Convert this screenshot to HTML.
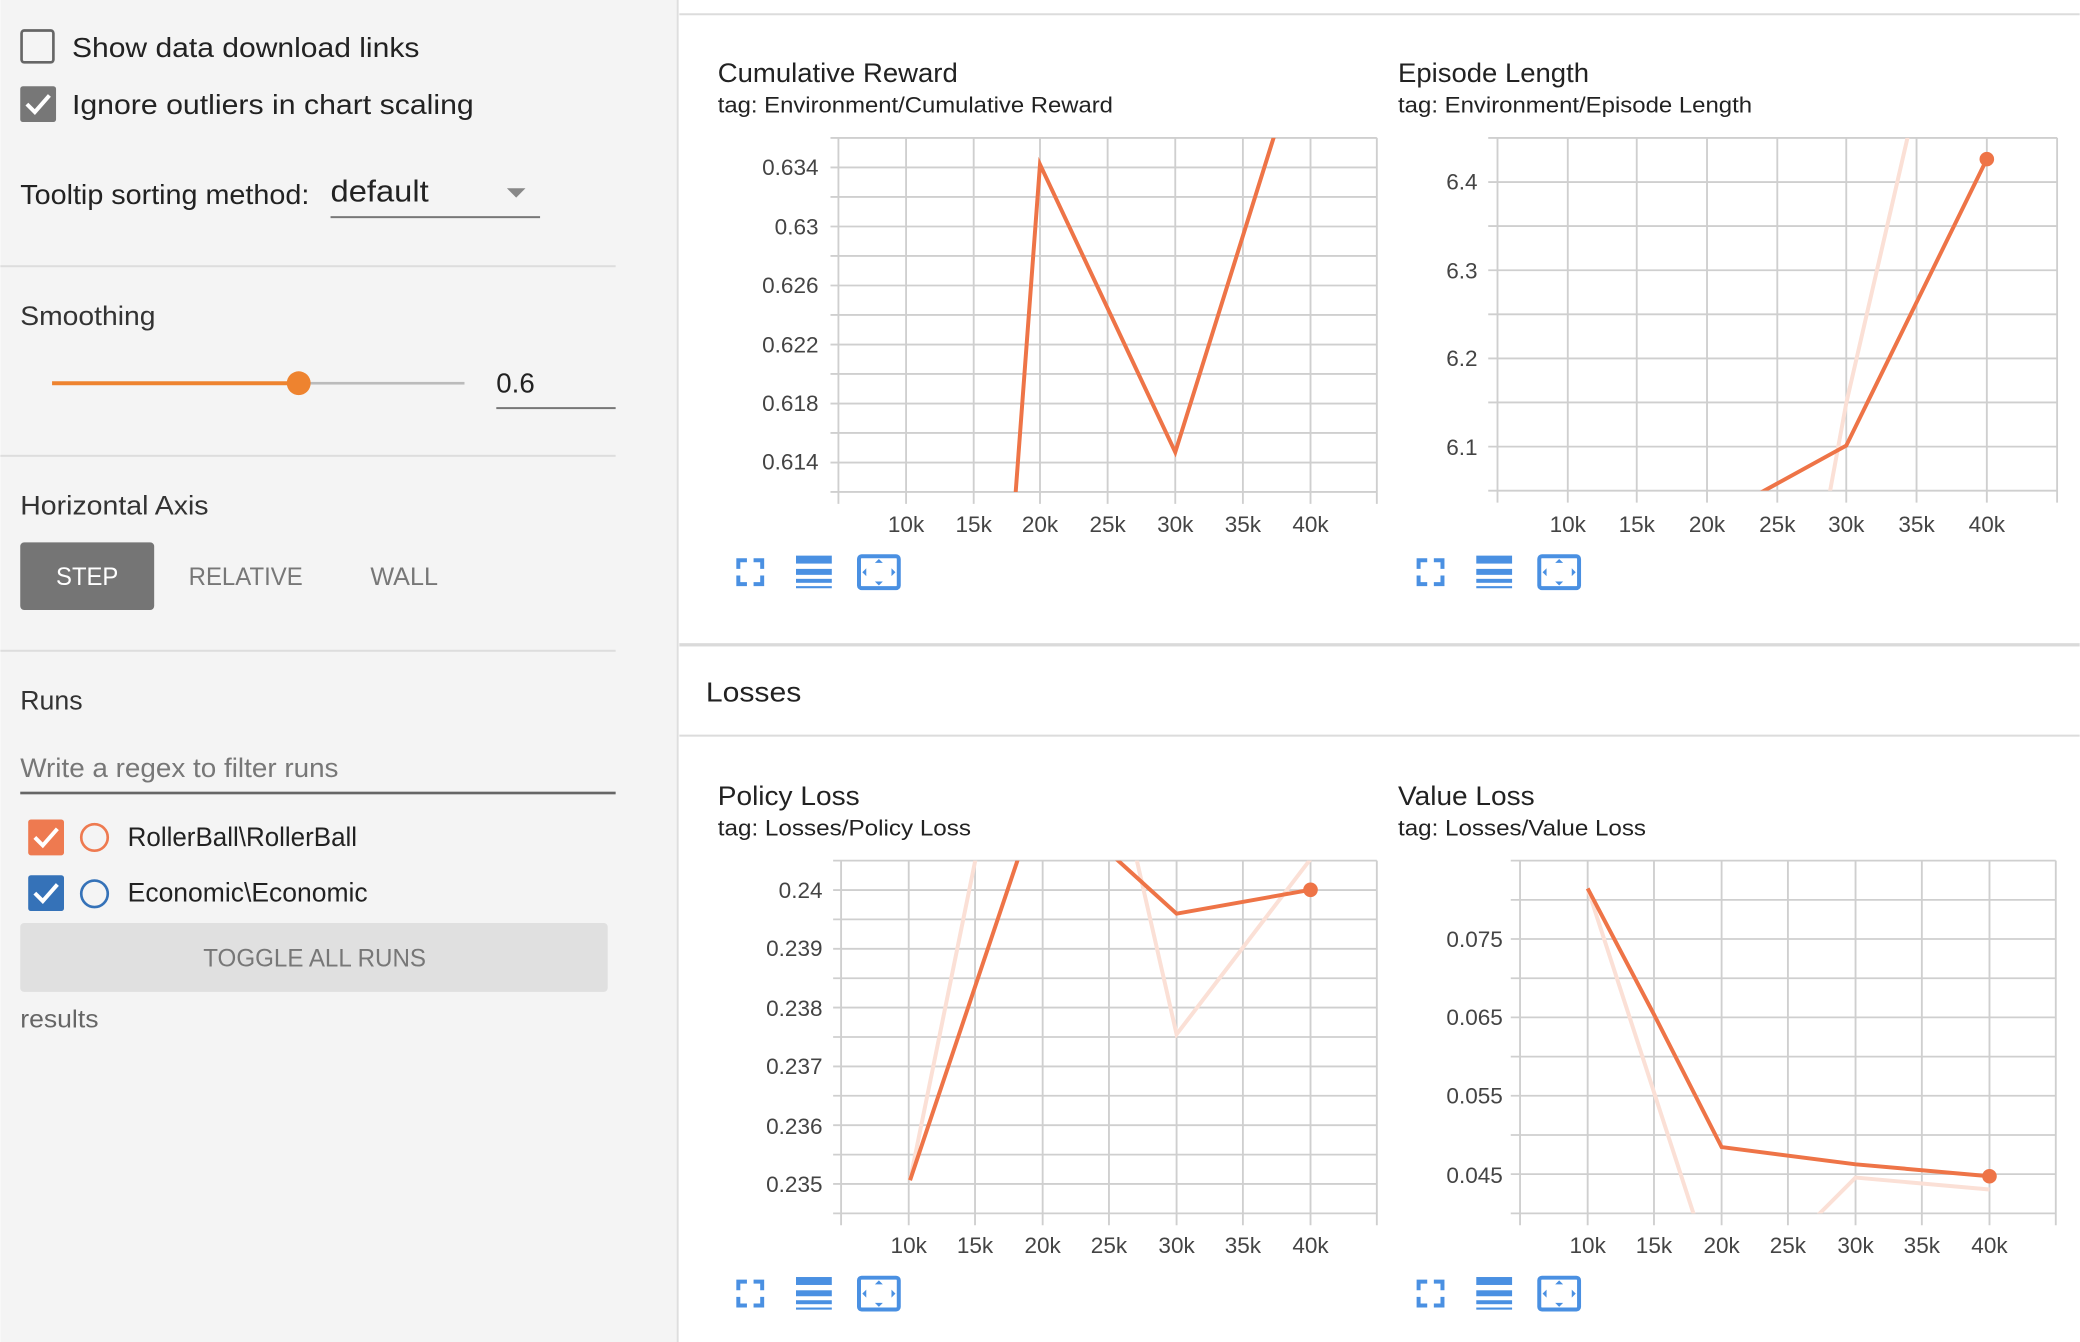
<!DOCTYPE html>
<html><head><meta charset="utf-8"><style>
html,body{margin:0;padding:0;width:2080px;height:1342px;overflow:hidden;background:#fff}
svg{display:block}
text{font-family:"Liberation Sans",sans-serif}
</style></head><body>
<svg width="2080" height="1342" viewBox="0 0 1568 1012" xmlns="http://www.w3.org/2000/svg">
<defs>
<g id="icons">
 <path d="M1.5,8V1.5H8 M13,1.5H19.5V8 M19.5,13V19.5H13 M8,19.5H1.5V13" fill="none" stroke="#4a90e2" stroke-width="3"/>
 <rect x="45" y="-2" width="27" height="6" fill="#4a90e2"/>
 <rect x="45" y="8" width="27" height="4.5" fill="#4a90e2"/>
 <rect x="45" y="15.5" width="27" height="3" fill="#4a90e2"/>
 <rect x="45" y="21" width="27" height="1.6" fill="#4a90e2"/>
 <rect x="92.5" y="-1.5" width="30" height="24" rx="2" fill="none" stroke="#4a90e2" stroke-width="3"/>
 <path d="M104.5,3.5L107.5,0.5L110.5,3.5Z M104.5,17.5L107.5,20.5L110.5,17.5Z M98,7.5L95,10.5L98,13.5Z M117,7.5L120,10.5L117,13.5Z" fill="#4a90e2"/>
</g>
<clipPath id="c1"><rect x="632" y="104" width="406" height="267"/></clipPath>
<clipPath id="c2"><rect x="1129" y="104" width="422" height="266"/></clipPath>
<clipPath id="c3"><rect x="634" y="649" width="404" height="266"/></clipPath>
<clipPath id="c4"><rect x="1146" y="649" width="404" height="266"/></clipPath>
</defs>

<!-- sidebar -->
<rect x="0" y="0" width="510" height="1012" fill="#f4f4f4"/>
<rect x="510" y="0" width="1.5" height="1012" fill="#dedede"/>
<rect x="16" y="23" width="24" height="24" rx="2" fill="none" stroke="#666" stroke-width="2"/>
<text x="54" y="43" font-size="21" fill="#222" textLength="262" lengthAdjust="spacingAndGlyphs">Show data download links</text>
<rect x="15" y="65" width="27" height="27" rx="2" fill="#777"/>
<path d="M20,78.5L26,84.5L37,72" fill="none" stroke="#fff" stroke-width="3"/>
<text x="54" y="86" font-size="21" fill="#222" textLength="303" lengthAdjust="spacingAndGlyphs">Ignore outliers in chart scaling</text>
<text x="15" y="154" font-size="21" fill="#222" textLength="218" lengthAdjust="spacingAndGlyphs">Tooltip sorting method:</text>
<text x="249" y="152" font-size="23" fill="#222" textLength="74" lengthAdjust="spacingAndGlyphs">default</text>
<path d="M382,142L396,142L389,149Z" fill="#888"/>
<rect x="249" y="163" width="158" height="1.5" fill="#777"/>
<rect x="0" y="200" width="464" height="1.5" fill="#ddd"/>
<text x="15" y="245" font-size="20" fill="#333" textLength="102" lengthAdjust="spacingAndGlyphs">Smoothing</text>
<rect x="39" y="287.5" width="186" height="3" fill="#ee832f"/>
<rect x="225" y="288" width="125" height="2" fill="#bbb"/>
<circle cx="225" cy="289" r="9" fill="#ee832f"/>
<text x="374" y="296" font-size="21" fill="#222" textLength="29" lengthAdjust="spacingAndGlyphs">0.6</text>
<rect x="374" y="307" width="90" height="1.5" fill="#777"/>
<rect x="0" y="343" width="464" height="1.5" fill="#ddd"/>
<text x="15" y="388" font-size="20" fill="#333" textLength="142" lengthAdjust="spacingAndGlyphs">Horizontal Axis</text>
<rect x="15" y="409" width="101" height="51" rx="3" fill="#757575"/>
<text x="42" y="441" font-size="19" fill="#fff" textLength="47" lengthAdjust="spacingAndGlyphs">STEP</text>
<text x="142" y="441" font-size="19" fill="#777" textLength="86" lengthAdjust="spacingAndGlyphs">RELATIVE</text>
<text x="279" y="441" font-size="19" fill="#777" textLength="51" lengthAdjust="spacingAndGlyphs">WALL</text>
<rect x="0" y="490" width="464" height="1.5" fill="#ddd"/>
<text x="15" y="535" font-size="20" fill="#333" textLength="47" lengthAdjust="spacingAndGlyphs">Runs</text>
<text x="15" y="586" font-size="20" fill="#777" textLength="240" lengthAdjust="spacingAndGlyphs">Write a regex to filter runs</text>
<rect x="15" y="597" width="449" height="2" fill="#666"/>
<rect x="21" y="618" width="27" height="27" rx="2" fill="#ee7a50"/>
<path d="M26,631.5L32,637.5L43,625" fill="none" stroke="#fff" stroke-width="3"/>
<circle cx="71" cy="631.5" r="10" fill="none" stroke="#ee7a50" stroke-width="2"/>
<text x="96" y="638" font-size="20" fill="#222" textLength="173" lengthAdjust="spacingAndGlyphs">RollerBall\RollerBall</text>
<rect x="21" y="660" width="27" height="27" rx="2" fill="#3572b8"/>
<path d="M26,673.5L32,679.5L43,667" fill="none" stroke="#fff" stroke-width="3"/>
<circle cx="71" cy="674" r="10" fill="none" stroke="#3572b8" stroke-width="2"/>
<text x="96" y="680" font-size="20" fill="#222" textLength="181" lengthAdjust="spacingAndGlyphs">Economic\Economic</text>
<rect x="15" y="696" width="443" height="52" rx="3" fill="#e0e0e0"/>
<text x="153" y="729" font-size="19" fill="#777" textLength="168" lengthAdjust="spacingAndGlyphs">TOGGLE ALL RUNS</text>
<text x="15" y="775" font-size="19" fill="#666" textLength="59" lengthAdjust="spacingAndGlyphs">results</text>

<!-- main separators -->
<rect x="512" y="10" width="1056" height="1.5" fill="#dcdcdc"/>
<rect x="512" y="485" width="1056" height="2.5" fill="#dadada"/>
<rect x="512" y="554" width="1056" height="1.5" fill="#dcdcdc"/>
<text x="532" y="529" font-size="21" fill="#222" textLength="72" lengthAdjust="spacingAndGlyphs">Losses</text>

<!-- chart 1 -->
<text x="541" y="62" font-size="20" fill="#222" textLength="181" lengthAdjust="spacingAndGlyphs">Cumulative Reward</text>
<text x="541" y="85" font-size="17" fill="#222" textLength="298" lengthAdjust="spacingAndGlyphs">tag: Environment/Cumulative Reward</text>
<path fill="none" stroke="#cfcfcf" stroke-width="1.4" d="M632,104V380M683,104V380M734,104V380M784,104V380M835,104V380M886,104V380M937,104V380M988,104V380M1038,104V380
M626,104H1038M626,126.3H1038M626,148.5H1038M626,170.8H1038M626,193H1038M626,215.3H1038M626,237.5H1038M626,259.8H1038M626,282H1038M626,304.3H1038M626,326.5H1038M626,348.8H1038M626,371H1038"/>
<g font-size="17" fill="#444" text-anchor="end">
<text x="617" y="132">0.634</text><text x="617" y="177">0.63</text><text x="617" y="221">0.626</text><text x="617" y="266">0.622</text><text x="617" y="310">0.618</text><text x="617" y="354">0.614</text>
</g>
<g font-size="17" fill="#444" text-anchor="middle">
<text x="683" y="401">10k</text><text x="734" y="401">15k</text><text x="784" y="401">20k</text><text x="835" y="401">25k</text><text x="886" y="401">30k</text><text x="937" y="401">35k</text><text x="988" y="401">40k</text>
</g>
<g clip-path="url(#c1)"><polyline points="765,380 784,124 886,341 962,98" fill="none" stroke="#ee7447" stroke-width="3"/></g>
<use href="#icons" x="555" y="421"/>

<!-- chart 2 -->
<text x="1054" y="62" font-size="20" fill="#222" textLength="144" lengthAdjust="spacingAndGlyphs">Episode Length</text>
<text x="1054" y="85" font-size="17" fill="#222" textLength="267" lengthAdjust="spacingAndGlyphs">tag: Environment/Episode Length</text>
<path fill="none" stroke="#cfcfcf" stroke-width="1.4" d="M1129,104V379M1182,104V379M1234,104V379M1287,104V379M1340,104V379M1392,104V379M1445,104V379M1498,104V379M1551,104V379
M1122,104H1551M1122,137.3H1551M1122,170.5H1551M1122,203.8H1551M1122,237H1551M1122,270.3H1551M1122,303.5H1551M1122,336.8H1551M1122,370H1551"/>
<g font-size="17" fill="#444" text-anchor="end">
<text x="1114" y="143">6.4</text><text x="1114" y="210">6.3</text><text x="1114" y="276">6.2</text><text x="1114" y="343">6.1</text>
</g>
<g font-size="17" fill="#444" text-anchor="middle">
<text x="1182" y="401">10k</text><text x="1234" y="401">15k</text><text x="1287" y="401">20k</text><text x="1340" y="401">25k</text><text x="1392" y="401">30k</text><text x="1445" y="401">35k</text><text x="1498" y="401">40k</text>
</g>
<g clip-path="url(#c2)">
<polyline points="1378,380 1392,304 1440,96" fill="none" stroke="#fbe0d6" stroke-width="3"/>
<polyline points="1312,380 1392,336 1498,120" fill="none" stroke="#ee7447" stroke-width="3"/>
</g>
<circle cx="1498" cy="120" r="5.5" fill="#ee7447"/>
<use href="#icons" x="1068" y="421"/>

<!-- chart 3 -->
<text x="541" y="607" font-size="20" fill="#222" textLength="107" lengthAdjust="spacingAndGlyphs">Policy Loss</text>
<text x="541" y="630" font-size="17" fill="#222" textLength="191" lengthAdjust="spacingAndGlyphs">tag: Losses/Policy Loss</text>
<path fill="none" stroke="#cfcfcf" stroke-width="1.4" d="M634,649V924M685,649V924M735,649V924M786,649V924M836,649V924M887,649V924M937,649V924M988,649V924M1038,649V924
M628,649H1038M628,671.2H1038M628,693.3H1038M628,715.5H1038M628,737.7H1038M628,759.8H1038M628,782H1038M628,804.2H1038M628,826.3H1038M628,848.5H1038M628,870.7H1038M628,892.8H1038M628,915H1038"/>
<g font-size="17" fill="#444" text-anchor="end">
<text x="620" y="677">0.24</text><text x="620" y="721">0.239</text><text x="620" y="766">0.238</text><text x="620" y="810">0.237</text><text x="620" y="855">0.236</text><text x="620" y="899">0.235</text>
</g>
<g font-size="17" fill="#444" text-anchor="middle">
<text x="685" y="945">10k</text><text x="735" y="945">15k</text><text x="786" y="945">20k</text><text x="836" y="945">25k</text><text x="887" y="945">30k</text><text x="937" y="945">35k</text><text x="988" y="945">40k</text>
</g>
<g clip-path="url(#c3)">
<polyline points="686,890 737,640" fill="none" stroke="#fbe0d6" stroke-width="3"/>
<polyline points="855,640 887,780 994,640" fill="none" stroke="#fbe0d6" stroke-width="3"/>
<polyline points="686,890 770,640" fill="none" stroke="#ee7447" stroke-width="3"/>
<polyline points="833,640 887,689 988,671" fill="none" stroke="#ee7447" stroke-width="3"/>
</g>
<circle cx="988" cy="671" r="5.5" fill="#ee7447"/>
<use href="#icons" x="555" y="965"/>

<!-- chart 4 -->
<text x="1054" y="607" font-size="20" fill="#222" textLength="103" lengthAdjust="spacingAndGlyphs">Value Loss</text>
<text x="1054" y="630" font-size="17" fill="#222" textLength="187" lengthAdjust="spacingAndGlyphs">tag: Losses/Value Loss</text>
<path fill="none" stroke="#cfcfcf" stroke-width="1.4" d="M1146,649V924M1197,649V924M1247,649V924M1298,649V924M1348,649V924M1399,649V924M1449,649V924M1500,649V924M1550,649V924
M1139,649H1550M1139,678.6H1550M1139,708.1H1550M1139,737.7H1550M1139,767.2H1550M1139,796.8H1550M1139,826.3H1550M1139,855.9H1550M1139,885.4H1550M1139,915H1550"/>
<g font-size="17" fill="#444" text-anchor="end">
<text x="1133" y="714">0.075</text><text x="1133" y="773">0.065</text><text x="1133" y="832">0.055</text><text x="1133" y="892">0.045</text>
</g>
<g font-size="17" fill="#444" text-anchor="middle">
<text x="1197" y="945">10k</text><text x="1247" y="945">15k</text><text x="1298" y="945">20k</text><text x="1348" y="945">25k</text><text x="1399" y="945">30k</text><text x="1449" y="945">35k</text><text x="1500" y="945">40k</text>
</g>
<g clip-path="url(#c4)">
<polyline points="1197,670 1280,925" fill="none" stroke="#fbe0d6" stroke-width="3"/>
<polyline points="1362,925 1399,888 1500,897" fill="none" stroke="#fbe0d6" stroke-width="3"/>
<polyline points="1197,670 1247,765 1298,865 1399,878 1500,887" fill="none" stroke="#ee7447" stroke-width="3"/>
</g>
<circle cx="1500" cy="887" r="5.5" fill="#ee7447"/>
<use href="#icons" x="1068" y="965"/>
</svg>
</body></html>
